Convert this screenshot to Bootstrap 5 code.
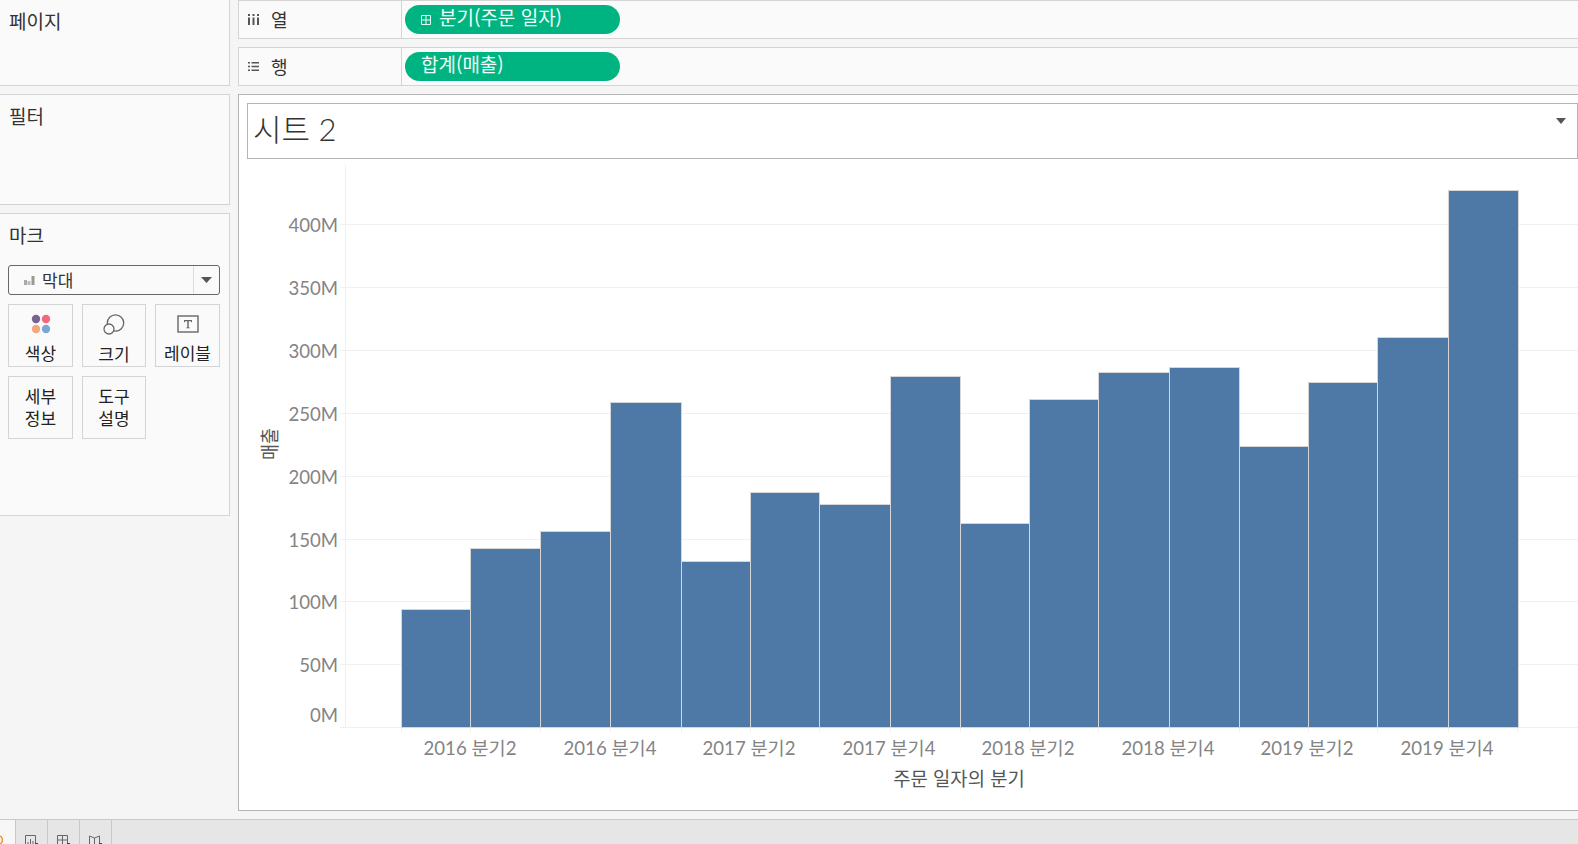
<!DOCTYPE html>
<html lang="ko">
<head>
<meta charset="utf-8">
<title>시트 2</title>
<link href="https://cdn.jsdelivr.net/npm/bootstrap@5.3.0/dist/css/bootstrap.min.css" rel="stylesheet">
<style>
html,body{height:100%;overflow:hidden}
body{background:#f5f5f5;color:#333;font-family:"Noto Sans CJK KR","Liberation Sans",sans-serif;font-size:19px}
.app-root{height:844px}
.work-area{height:819px;flex:none;gap:8px}
.side-col{width:230px;flex:none;padding-bottom:0;gap:8px}
.pane-box{background:#fafafa;border:1px solid #d4d4d4;border-left:0;padding:7px 9px;line-height:28px}
.pane-page{height:87px;margin-top:-1px}
.pane-filter{height:111px}
.pane-mark{height:303px}
.pane-mark .pane-title{margin-bottom:16px}
.mark-select{height:30px;border:1px solid #666;border-radius:3px;background:#fafafa;width:212px;margin-left:-1px;font-size:17px}
.mark-select .sel-main{padding-left:15px;gap:7px}
.mark-select .sel-arrow{width:26px;border-left:1px solid #ddd;align-self:stretch}
.mark-grid{display:grid;grid-template-columns:65px 64px 65px;column-gap:9px;row-gap:9px;margin:9px 0 0 -1px}
.mark-cell{height:63px;border:1px solid #d4d4d4;font-size:17px;line-height:22px;text-align:center;color:#222;padding-top:8px}
.mark-icon-cell{padding-top:9px}
.mark-cell svg{display:block;margin-bottom:8px}
.main-col{flex:1 1 auto;min-width:0;gap:8px}
.shelf-row{height:39px;background:#fafafa;border:1px solid #d4d4d4;border-right:0}
.shelf-label{width:163px;flex:none;border-right:1px solid #d4d4d4;padding-left:9px;gap:12px;height:100%;font-size:18px}
.shelf-pill{width:215px;height:29px;border-radius:15px;background:#00b482;color:#f2fff9;margin-left:3px;padding-left:16px;font-size:19px;line-height:26px;gap:8px}
.shelf-pill span{margin-top:-5px}
.chart-frame{height:717px;background:#fff;border:1px solid #b4b4b4;border-right:0;padding:8px 0 0 8px}
.title-box{height:56px;border:1px solid #b4b4b4;padding-left:5px;font-size:31px;font-weight:300;line-height:50px;color:#333;font-family:"Lato","Noto Sans CJK KR",sans-serif}
.title-arrow{position:absolute;right:11px;top:14px}
.chart-svg{display:block;margin:0 0 0 -8px}
.tick-y,.tick-x{font-family:"Lato","Noto Sans CJK KR",sans-serif;font-size:18.600px;fill:#848484}
.axis-title{font-family:"Noto Sans CJK KR",sans-serif;font-size:18.800px;fill:#555}
.tab-strip{height:25px;flex:none;background:#e6e6e6;border-top:1px solid #c8c8c8;overflow:hidden}
.tab-item{width:32px;height:25px;border-right:1px solid #c8c8c8;padding:15px 0 0 9px}
.tab-item svg{display:block}
.tab-first{width:16px;background:#f7f7f7;padding:0;overflow:hidden}
</style>
</head>
<body>
<div class="app-root d-flex flex-column">
  <div class="work-area d-flex">
    <div class="side-col d-flex flex-column">
      <div class="pane-box pane-page">페이지</div>
      <div class="pane-box pane-filter">필터</div>
      <div class="pane-box pane-mark">
        <div class="pane-title">마크</div>
        <div class="mark-select d-flex align-items-center justify-content-between">
          <div class="sel-main d-flex align-items-center">
            <svg width="11" height="11" viewBox="0 0 11 11"><rect x="0" y="5" width="3" height="5" fill="#aaa"/><rect x="3.500" y="6" width="3" height="4" fill="#bbb"/><rect x="7.500" y="1" width="3" height="9" fill="#999"/></svg>
            <span>막대</span>
          </div>
          <div class="sel-arrow d-flex align-items-center justify-content-center">
            <svg width="11" height="6" viewBox="0 0 11 6"><path d="M0 0h11L5.500 6z" fill="#555"/></svg>
          </div>
        </div>
        <div class="mark-grid">
          <div class="mark-cell mark-icon-cell d-flex flex-column align-items-center">
            <svg width="20" height="20" viewBox="0 0 20 20"><circle cx="5" cy="5" r="4.200" fill="#7b6390"/><circle cx="15" cy="5" r="4.200" fill="#f2697f"/><circle cx="5" cy="15" r="4.200" fill="#f5a67a"/><circle cx="15" cy="15" r="4.200" fill="#7ea6d2"/></svg>
            <span>색상</span>
          </div>
          <div class="mark-cell mark-icon-cell d-flex flex-column align-items-center">
            <svg width="22" height="21" viewBox="0 0 22 21"><circle cx="12.500" cy="9" r="8.200" fill="none" stroke="#666" stroke-width="1.300"/><circle cx="6" cy="15" r="5" fill="#fafafa" stroke="#666" stroke-width="1.300"/></svg>
            <span>크기</span>
          </div>
          <div class="mark-cell mark-icon-cell d-flex flex-column align-items-center">
            <svg width="22" height="20" viewBox="0 0 22 20"><rect x="1" y="2" width="20" height="16" fill="none" stroke="#666" stroke-width="1.400"/><path d="M7 6h8v2.200h-.8L14 7.200h-2.300v6l1.100.5v.5H9.200v-.5l1.100-.5v-6H8L7.800 8.200H7z" fill="#666"/></svg>
            <span>레이블</span>
          </div>
          <div class="mark-cell">세부<br>정보</div>
          <div class="mark-cell">도구<br>설명</div>
        </div>
      </div>
    </div>
    <div class="main-col d-flex flex-column">
      <div class="shelf-row d-flex align-items-center">
        <div class="shelf-label d-flex align-items-center">
          <svg width="11" height="11" viewBox="0 0 11 11"><path d="M0 0h2v2H0zM4.500 0h2v2h-2zM9 0h2v2H9zM0 3.500h2V11H0zM4.500 3.500h2V11h-2zM9 3.500h2V11H9z" fill="#555"/></svg>
          <span>열</span>
        </div>
        <div class="shelf-pill d-flex align-items-center">
          <svg width="10" height="10" viewBox="0 0 10 10"><path d="M.5.500h9v9h-9zM5 .5v9M.5 5h9" fill="none" stroke="#e6fff6"/></svg>
          <span>분기(주문 일자)</span>
        </div>
      </div>
      <div class="shelf-row d-flex align-items-center">
        <div class="shelf-label d-flex align-items-center">
          <svg width="11" height="11" viewBox="0 0 11 11"><path d="M0 1h2v1.600H0zM3.500 1H11v1.600H3.500zM0 4.700h2v1.600H0zM3.500 4.700H11v1.600H3.500zM0 8.400h2V10H0zM3.500 8.400H11V10H3.500z" fill="#555"/></svg>
          <span>행</span>
        </div>
        <div class="shelf-pill d-flex align-items-center"><span>합계(매출)</span></div>
      </div>
      <div class="chart-frame">
        <div class="title-box position-relative">시트 2
          <svg class="title-arrow" width="10" height="6" viewBox="0 0 10 6"><path d="M0 0h10L5 6z" fill="#555"/></svg>
        </div>
        <svg class="chart-svg" width="1340" height="650" viewBox="239 159 1340 650" role="img">
          <g stroke="#f0f0f0" stroke-width="1">
            <path d="M345.500 165V727M340 664.500H1578M340 601.500H1578M340 539.500H1578M340 476.500H1578M340 413.500H1578M340 350.500H1578M340 287.500H1578M340 224.500H1578M340 727.500H1578"/>
            <path d="M401.500 727v5M470.500 727v5M540.500 727v5M610.500 727v5M681.500 727v5M750.500 727v5M819.500 727v5M890.500 727v5M960.500 727v5M1029.500 727v5M1098.500 727v5M1169.500 727v5M1239.500 727v5M1308.500 727v5M1377.500 727v5M1448.500 727v5M1517.500 727v5"/>
          </g>
          <g fill="#4e79a7" stroke="#d6d6d6" stroke-width="1">
            <rect x="401.500" y="609.500" width="69" height="118"/>
            <rect x="470.500" y="548.500" width="70" height="179"/>
            <rect x="540.500" y="531.500" width="70" height="196"/>
            <rect x="610.500" y="402.500" width="71" height="325"/>
            <rect x="681.500" y="561.500" width="69" height="166"/>
            <rect x="750.500" y="492.500" width="69" height="235"/>
            <rect x="819.500" y="504.500" width="71" height="223"/>
            <rect x="890.500" y="376.500" width="70" height="351"/>
            <rect x="960.500" y="523.500" width="69" height="204"/>
            <rect x="1029.500" y="399.500" width="69" height="328"/>
            <rect x="1098.500" y="372.500" width="71" height="355"/>
            <rect x="1169.500" y="367.500" width="70" height="360"/>
            <rect x="1239.500" y="446.500" width="69" height="281"/>
            <rect x="1308.500" y="382.500" width="69" height="345"/>
            <rect x="1377.500" y="337.500" width="71" height="390"/>
            <rect x="1448.500" y="190.500" width="70" height="537"/>
          </g>
          <g class="tick-y" text-anchor="end">
            <text x="338" y="232">400M</text>
            <text x="338" y="295">350M</text>
            <text x="338" y="358">300M</text>
            <text x="338" y="421">250M</text>
            <text x="338" y="484">200M</text>
            <text x="338" y="547">150M</text>
            <text x="338" y="609">100M</text>
            <text x="338" y="672">50M</text>
            <text x="338" y="722">0M</text>
          </g>
          <g class="tick-x" text-anchor="middle">
            <text x="470" y="755">2016 분기2</text>
            <text x="610" y="755">2016 분기4</text>
            <text x="749" y="755">2017 분기2</text>
            <text x="889" y="755">2017 분기4</text>
            <text x="1028" y="755">2018 분기2</text>
            <text x="1168" y="755">2018 분기4</text>
            <text x="1307" y="755">2019 분기2</text>
            <text x="1447" y="755">2019 분기4</text>
          </g>
          <text class="axis-title" x="959" y="786" text-anchor="middle">주문 일자의 분기</text>
          <text class="axis-title" transform="translate(277 444) rotate(-90)" text-anchor="middle" textLength="32" lengthAdjust="spacingAndGlyphs">매출</text>
        </svg>
      </div>
    </div>
  </div>
  <div class="tab-strip d-flex">
    <div class="tab-item tab-first"><svg width="4" height="24" viewBox="0 0 4 24"><circle cx="-2" cy="20" r="4.500" fill="none" stroke="#e8953c" stroke-width="1.500"/></svg></div>
    <div class="tab-item"><svg width="13" height="12" viewBox="0 0 13 12"><path d="M.5 12V.5h10V9M3 10V7M5.500 10V4M8 10V6" fill="none" stroke="#666"/><rect x="10" y="8" width="3" height="3" fill="#444"/></svg></div>
    <div class="tab-item"><svg width="13" height="12" viewBox="0 0 13 12"><path d="M.5 12V.5h10V9M.5 5h10M5.500 .5V12" fill="none" stroke="#666"/><rect x="10" y="8" width="3" height="3" fill="#444"/></svg></div>
    <div class="tab-item"><svg width="13" height="12" viewBox="0 0 13 12"><path d="M.5 12V1L5.500 3l5-2v8M5.500 3v9" fill="none" stroke="#666"/><rect x="10" y="8" width="3" height="3" fill="#444"/></svg></div>
  </div>
</div>
</body>
</html>
